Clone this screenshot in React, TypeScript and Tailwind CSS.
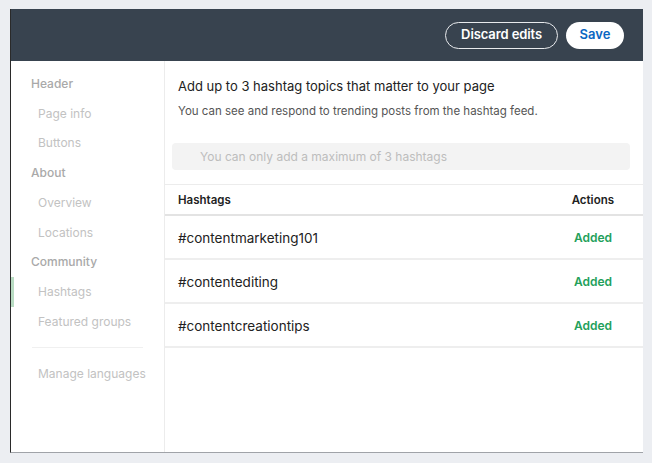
import React from 'react';

const navItems: { label: string; section?: boolean; active?: boolean }[] = [
    { label: 'Header', section: true },
    { label: 'Page info' },
    { label: 'Buttons' },
    { label: 'About', section: true },
    { label: 'Overview' },
    { label: 'Locations' },
    { label: 'Community', section: true },
    { label: 'Hashtags', active: true },
    { label: 'Featured groups' },
];

const hashtags = ['#contentmarketing101', '#contentediting', '#contentcreationtips'];

export default function App() {
    return (
        <div
            className="w-[652px] h-[463px] bg-[#eceef2] pt-[9px] pl-[10px] overflow-hidden"
            style={{ fontFamily: 'Inter, "Noto Sans", sans-serif' }}
        >
            <div className="w-[633px] h-[444px] bg-white flex flex-col border-l border-l-[#2a2a2a] border-b border-b-[#a0a3a8]">
                {/* Top bar */}
                <div className="h-[52px] shrink-0 bg-[#38434f] flex items-center justify-end gap-2 pr-[19px]">
                    <button className="h-[27px] px-[15px] rounded-full border-[1.5px] border-[#e8eaed] text-white text-[13px] font-semibold tracking-[-0.1px]">
                        Discard edits
                    </button>
                    <button className="h-[27px] w-[58px] rounded-full bg-white text-[#0a66c2] text-[13px] font-semibold">
                        Save
                    </button>
                </div>

                <div className="flex flex-1 min-h-0">
                    {/* Sidebar */}
                    <div className="w-[154px] shrink-0 border-r border-[#ececec] pt-[8px]">
                        {navItems.map((item) => (
                            <div
                                key={item.label}
                                className={`h-[29.75px] flex items-center text-[12px] ${
                                    item.section
                                        ? 'pl-5 text-[#a9a9a9] font-medium'
                                        : item.active
                                        ? 'pl-[24px] border-l-[3px] border-[#b9dcc3] text-[#c2c2c2]'
                                        : 'pl-[27px] text-[#c2c2c2]'
                                }`}
                            >
                                {item.label}
                            </div>
                        ))}
                        <div className="ml-[21px] w-[111px] h-px bg-[#f0f0f0] mt-[10px] mb-[11px]" />
                        <div className="h-[30px] flex items-center pl-[27px] text-[12px] text-[#c2c2c2]">
                            Manage languages
                        </div>
                    </div>

                    {/* Main */}
                    <div className="flex-1 flex flex-col">
                        <div className="pl-[13px] pt-[15px] text-[13px] leading-5 text-[#222]">
                            Add up to 3 hashtag topics that matter to your page
                        </div>
                        <div className="pl-[13px] mt-[7px] text-[11.5px] leading-4 text-[#555]">
                            You can see and respond to trending posts from the hashtag feed.
                        </div>
                        <div className="ml-[7px] mr-[13px] mt-[24px] h-[27px] rounded bg-[#f3f3f3] flex items-center pl-[28px] text-[12px] text-[#bdbdbd]">
                            You can only add a maximum of 3 hashtags
                        </div>

                        {/* Table */}
                        <div className="mt-[14px] border-t border-[#ececec]">
                            <div className="h-[31px] pt-[2px] flex items-center justify-between pl-[13px] pr-[29px] border-b-2 border-[#e3e3e3] text-[11.5px] font-semibold text-[#222]">
                                <span>Hashtags</span>
                                <span>Actions</span>
                            </div>
                            {hashtags.map((tag) => (
                                <div
                                    key={tag}
                                    className="h-[44px] pt-[2px] flex items-center justify-between pl-[13px] pr-[31px] border-b-2 border-[#eeeeee]"
                                >
                                    <span className="text-[13.5px] text-[#222]">{tag}</span>
                                    <span className="text-[12px] font-semibold text-[#23a05a]">Added</span>
                                </div>
                            ))}
                        </div>
                    </div>
                </div>
            </div>
        </div>
    );
}
